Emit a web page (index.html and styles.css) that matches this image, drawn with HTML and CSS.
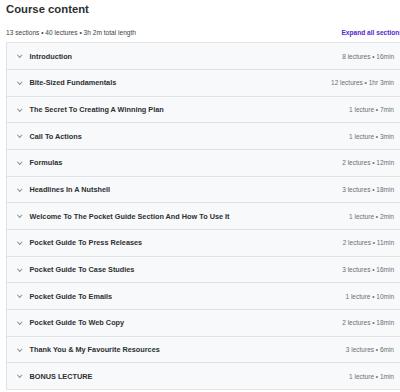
FILE: index.html
```html
<!DOCTYPE html>
<html lang="en">
<head>
    <meta charset="UTF-8">
    <title>Course content</title>
    <link rel="stylesheet" href="styles.css">
</head>
<body>
    <div class="course">
        <h2>Course content</h2>
        <div class="summary">
            <span>13 sections • 40 lectures • 3h 2m total length</span>
            <a class="expand" href="#">Expand all sections</a>
        </div>
        <div class="sections">
            <div class="section"><span class="chev"></span><span class="title">Introduction</span><span class="info">8 lectures • 16min</span></div>
            <div class="section"><span class="chev"></span><span class="title">Bite-Sized Fundamentals</span><span class="info">12 lectures • 1hr 3min</span></div>
            <div class="section"><span class="chev"></span><span class="title">The Secret To Creating A Winning Plan</span><span class="info">1 lecture • 7min</span></div>
            <div class="section"><span class="chev"></span><span class="title">Call To Actions</span><span class="info">1 lecture • 3min</span></div>
            <div class="section"><span class="chev"></span><span class="title">Formulas</span><span class="info">2 lectures • 12min</span></div>
            <div class="section"><span class="chev"></span><span class="title">Headlines In A Nutshell</span><span class="info">3 lectures • 18min</span></div>
            <div class="section"><span class="chev"></span><span class="title">Welcome To The Pocket Guide Section And How To Use It</span><span class="info">1 lecture • 2min</span></div>
            <div class="section"><span class="chev"></span><span class="title">Pocket Guide To Press Releases</span><span class="info">2 lectures • 11min</span></div>
            <div class="section"><span class="chev"></span><span class="title">Pocket Guide To Case Studies</span><span class="info">3 lectures • 16min</span></div>
            <div class="section"><span class="chev"></span><span class="title">Pocket Guide To Emails</span><span class="info">1 lecture • 10min</span></div>
            <div class="section"><span class="chev"></span><span class="title">Pocket Guide To Web Copy</span><span class="info">2 lectures • 18min</span></div>
            <div class="section"><span class="chev"></span><span class="title">Thank You &amp; My Favourite Resources</span><span class="info">3 lectures • 6min</span></div>
            <div class="section"><span class="chev"></span><span class="title">BONUS LECTURE</span><span class="info">1 lecture • 1min</span></div>
        </div>
    </div>
</body>
</html>
```

FILE: styles.css
```css
html, body {
    margin: 0;
    padding: 0;
    overflow: hidden;
    background: #fff;
}
body {
    font-family: 'Liberation Sans', Arial, sans-serif;
    color: #2d2f31;
}
.course {
    width: 397px;
    margin-left: 6px;
}
h2 {
    margin: 0;
    padding-top: 2px;
    font-size: 11.3px;
    line-height: 14px;
    font-weight: 700;
}
.summary {
    display: flex;
    justify-content: space-between;
    align-items: center;
    height: 26px;
    padding-top: 6px;
    box-sizing: border-box;
    font-size: 6.6px;
    color: #3e4143;
}
.expand {
    color: #5624d0;
    font-weight: 700;
    font-size: 6.6px;
    text-decoration: none;
}
.sections {
    border: 1px solid #dfe3e6;
}
.section {
    display: flex;
    align-items: center;
    box-sizing: border-box;
    height: 26.67px;
    padding: 0 8px 0 11px;
    background: #f7f9fa;
    border-top: 1px solid #dfe3e6;
}
.section:first-child {
    border-top: none;
    height: 26px;
}
.chev {
    width: 2.5px;
    height: 2.5px;
    border-right: 1px solid #8a8f93;
    border-bottom: 1px solid #8a8f93;
    transform: rotate(45deg);
    margin: -2px 8px 0 0;
}
.title {
    flex: 1;
    font-size: 7.3px;
    font-weight: 700;
}
.info {
    font-size: 6.5px;
    color: #6a6f73;
}
```
